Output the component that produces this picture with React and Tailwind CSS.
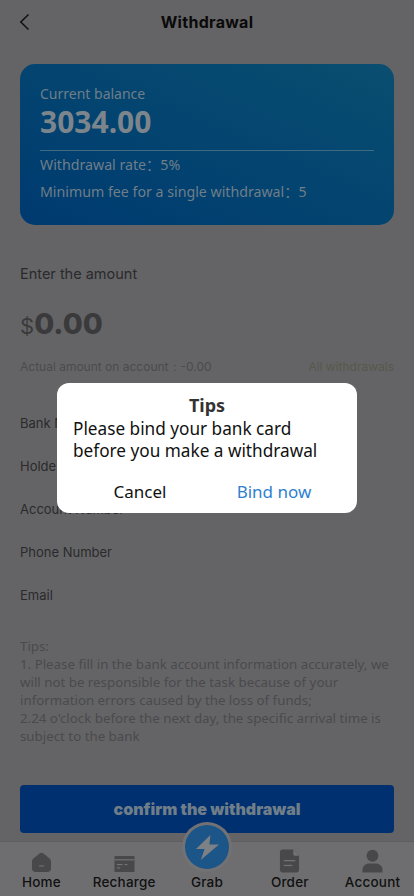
import React from 'react';

const fields = ['Bank Name', 'Holder Name', 'Account Number', 'Phone Number', 'Email'];

const tabs = [
  { label: 'Home', icon: HomeIcon },
  { label: 'Recharge', icon: CardIcon },
  { label: 'Grab', icon: null },
  { label: 'Order', icon: OrderIcon },
  { label: 'Account', icon: UserIcon },
];

function HomeIcon() {
  return (
    <svg width="21" height="21" viewBox="0 0 22 22">
      <path d="M9 1.600a3.200 3.200 0 0 1 4 0l6.500 5.200A4 4 0 0 1 21 10v7a4 4 0 0 1-4 4H5a4 4 0 0 1-4-4v-7a4 4 0 0 1 1.500-3.200z" fill="#48484a" />
      <rect x="8.500" y="14" width="5" height="1.200" fill="#737375" />
    </svg>
  );
}

function CardIcon() {
  return (
    <svg width="21" height="18" viewBox="0 0 22 18">
      <rect x="0.500" y="0.500" width="21" height="17" rx="1" fill="#48484a" />
      <rect x="0.500" y="4" width="21" height="1.200" fill="#737375" />
      <rect x="3" y="9" width="6" height="1.200" fill="#737375" />
      <rect x="11" y="9" width="3" height="1.200" fill="#737375" />
      <rect x="3" y="12.500" width="3.500" height="1.200" fill="#737375" />
    </svg>
  );
}

function OrderIcon() {
  return (
    <svg width="21" height="24" viewBox="0 0 22 24">
      <path d="M4 0h11l6 6.500V21a3 3 0 0 1-3 3H4a3 3 0 0 1-3-3V3a3 3 0 0 1 3-3z" fill="#48484a" />
      <path d="M15 0l6 6.500h-4.500a1.500 1.500 0 0 1-1.500-1.500z" fill="#737375" />
      <rect x="5" y="11" width="12" height="1.300" fill="#737375" />
      <rect x="5" y="16" width="9" height="1.300" fill="#737375" />
    </svg>
  );
}

function UserIcon() {
  return (
    <svg width="21" height="24" viewBox="0 0 22 24">
      <circle cx="11" cy="6.500" r="6.200" fill="#48484a" />
      <path d="M0.500 24v-3c0-4 3.500-6.500 7-6.500h7c3.500 0 7 2.500 7 6.500v3z" fill="#48484a" />
    </svg>
  );
}

export default function App() {
  return (
    <div className="relative flex h-[896px] w-[414px] flex-col overflow-hidden bg-[#646466] font-['Noto_Sans','Noto_Sans_CJK_SC',sans-serif]">
      {/* Header */}
      <div className="relative flex h-[44px] shrink-0 items-center justify-center">
        <svg className="absolute left-[19px] top-[13px]" width="11" height="18" viewBox="0 0 11 18" fill="none">
          <path d="M9.500 1.500L1.800 9l7.700 7.500" stroke="#111" strokeWidth="1.500" />
        </svg>
        <h1 className="font-['Inter',sans-serif] text-[16px] font-bold tracking-[0.3px] text-[#0a0a0a]">Withdrawal</h1>
      </div>

      <div className="flex-1 px-5 pt-5">
        {/* Balance card */}
        <div className="h-[161px] rounded-[15px] bg-linear-to-tr from-[#003a70] to-[#0a4e70] px-5 pt-[18px]">
          <p className="text-[14px] leading-[24px] text-[#6f7e88]">Current balance</p>
          <p className="text-[30px] font-bold leading-[32px] text-[#7c858c]">3034.00</p>
          <div className="mt-[12px] h-px bg-[#3f6a82]" />
          <p className="text-[14.200px] leading-[27px] text-[#6f7e88]">Withdrawal rate：5%</p>
          <p className="text-[14.200px] leading-[27px] text-[#6f7e88]">Minimum fee for a single withdrawal：5</p>
        </div>

        {/* Amount */}
        <p className="mt-[39px] font-['Inter',sans-serif] text-[14.500px] leading-5 text-[#2a2a2c]">Enter the amount</p>
        <div className="mt-[22px] flex items-baseline font-['Inter',sans-serif] leading-[36px] text-[#3a3a3c]">
          <span className="text-[22px]">$</span>
          <span className="text-[29px] font-extrabold">0.00</span>
        </div>
        <div className="mt-[15px] flex items-center justify-between font-['Inter',sans-serif] text-[12px] leading-4">
          <span className="text-[#4b4b4d]">Actual amount on account：-0.00</span>
          <span className="text-[#58584a]">All withdrawals</span>
        </div>

        {/* Bank fields */}
        <div className="mt-[31px] flex flex-col font-['Inter',sans-serif] text-[13px] text-[#2a2a2c]">
          {fields.map((field) => (
            <p key={field} className="h-[43px] leading-[34px]">{field}</p>
          ))}
        </div>

        {/* Tips */}
        <div className="mt-[16px] text-[13.300px] leading-[18px] text-[#4a4a4c]">
          <p>Tips:</p>
          <p>1. Please fill in the bank account information accurately, we will not be responsible for the task because of your information errors caused by the loss of funds;</p>
          <p>2.24 o'clock before the next day, the specific arrival time is subject to the bank</p>
        </div>

        <button className="mt-[40px] h-[48px] w-full rounded-[4px] bg-[#003070] font-['Inter',sans-serif] text-[16px] font-black text-[#6f7e88]">
          confirm the withdrawal
        </button>
      </div>

      {/* Bottom tab bar */}
      <div className="relative grid h-[55px] shrink-0 grid-cols-5 border-t border-[#5e5e60] bg-[#6e6e70]">
        <div className="absolute left-[182px] top-[-20px] flex h-[50px] w-[50px] items-center justify-center rounded-full bg-[#727274]">
          <div className="flex h-[44px] w-[44px] items-center justify-center rounded-full bg-[#1c5588]">
            <svg width="25" height="27" viewBox="0 0 26 28">
              <path d="M16 1L1 15.500h9L6 27l19-16h-10z" fill="#7d8084" />
            </svg>
          </div>
        </div>
        {tabs.map((tab) => (
          <div key={tab.label} className="flex flex-col items-center justify-end pb-[5px]">
            {tab.icon && <div className="flex h-[24px] items-end"><tab.icon /></div>}
            <span className="font-['Inter',sans-serif] text-[13.500px] font-medium leading-[18px] tracking-[0.2px] text-[#111]">{tab.label}</span>
          </div>
        ))}
      </div>

      {/* Bind card dialog */}
      <div className="absolute left-[57px] top-[383px] h-[130px] w-[300px] rounded-[12px] bg-white px-4 pt-[9px]">
        <h2 className="text-center text-[18px] font-bold leading-[26px] text-[#333]">Tips</h2>
        <p className="text-[17.200px] leading-[22px] text-[#111]">Please bind your bank card before you make a withdrawal</p>
        <div className="mt-[18px] grid grid-cols-2 text-[17px] leading-[24px]">
          <button className="text-[#111]">Cancel</button>
          <button className="text-[#2f7fd0]">Bind now</button>
        </div>
      </div>
    </div>
  );
}
